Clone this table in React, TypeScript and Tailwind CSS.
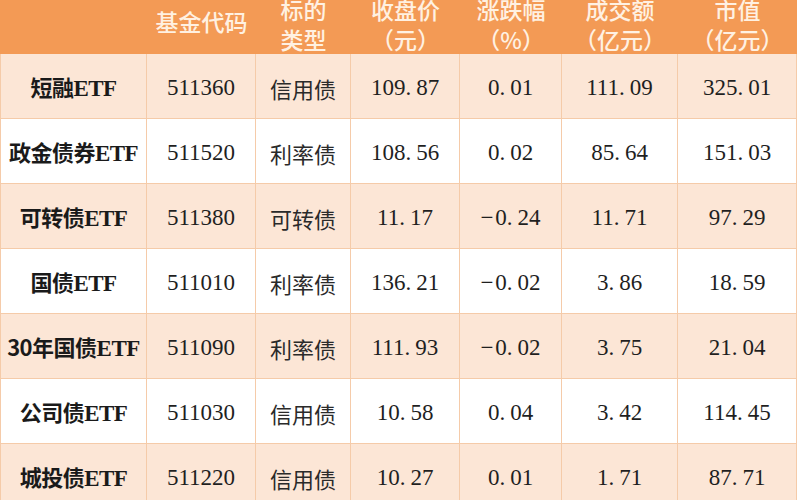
import React from "react";

const rows = [
  ["短融ETF", "511360", "信用债", "109.87", "0.01", "111.09", "325.01"],
  ["政金债券ETF", "511520", "利率债", "108.56", "0.02", "85.64", "151.03"],
  ["可转债ETF", "511380", "可转债", "11.17", "-0.24", "11.71", "97.29"],
  ["国债ETF", "511010", "利率债", "136.21", "-0.02", "3.86", "18.59"],
  ["30年国债ETF", "511090", "利率债", "111.93", "-0.02", "3.75", "21.04"],
  ["公司债ETF", "511030", "信用债", "10.58", "0.04", "3.42", "114.45"],
  ["城投债ETF", "511220", "信用债", "10.27", "0.01", "1.71", "87.71"],
];

const headers: (string[] | null)[] = [
  null,
  ["基金代码"],
  ["标的", "类型"],
  ["收盘价", "（元）"],
  ["涨跌幅", "（%）"],
  ["成交额", "（亿元）"],
  ["市值", "（亿元）"],
];

const cols = "grid grid-cols-[147px_109px_95px_109px_102px_116px_119px]";

function NumCell({ v }: { v: string }) {
  const neg = v.startsWith("-");
  const s = neg ? v.slice(1) : v;
  const i = s.indexOf(".");
  return (
    <span className="text-[23px] text-[#1f1f1f]" style={{ fontFamily: '"Liberation Serif", serif' }}>
      {neg ? <span className="mr-[2px]">−</span> : null}
      {s.slice(0, i)}
      <span className="mr-[5px]">.</span>
      {s.slice(i + 1)}
    </span>
  );
}

export default function App() {
  return (
    <div className="w-[800px] h-[500px] overflow-hidden bg-white" style={{ fontFamily: '"Noto Sans CJK SC", sans-serif' }}>
      <div className="w-[797px]">
        <div className={`${cols} grid-rows-[54px] h-[54px] bg-[#f39a55] overflow-hidden`}>
          {headers.map((h, i) => (
            <div
              key={i}
              className={`h-[54px] overflow-visible flex flex-col items-center justify-end text-[23px] leading-[30px] font-medium text-[#fff1e2] ${h && h.length === 1 ? "pb-[18px]" : ""}`}
            >
              {h ? h.map((t, j) => <div key={j} className="whitespace-nowrap">{t}</div>) : null}
            </div>
          ))}
        </div>
        {rows.map((r, ri) => (
          <div key={ri} className={`${cols} h-[65px] ${ri % 2 === 0 ? "bg-[#fce6d6]" : "bg-white"}`}>
            {r.map((c, ci) => (
              <div
                key={ci}
                className={`flex items-center justify-center pt-[4px] border-b border-r border-[#f5cba9] ${ci === 0 ? "border-l" : ""} whitespace-nowrap`}
              >
                {ci === 0 ? (
                  <span className="text-[22px] font-bold text-[#1a1a1a] tracking-[-0.5px]">
                    {c.replace("ETF", "")}
                    <span style={{ fontFamily: '"Liberation Serif", serif' }} className="text-[23px] font-bold">ETF</span>
                  </span>
                ) : ci === 1 ? (
                  <span className="text-[23px] text-[#1f1f1f]" style={{ fontFamily: '"Liberation Serif", serif' }}>{c}</span>
                ) : ci === 2 ? (
                  <span className="text-[22px] text-[#2a2a2a]">{c}</span>
                ) : (
                  <NumCell v={c} />
                )}
              </div>
            ))}
          </div>
        ))}
      </div>
    </div>
  );
}
